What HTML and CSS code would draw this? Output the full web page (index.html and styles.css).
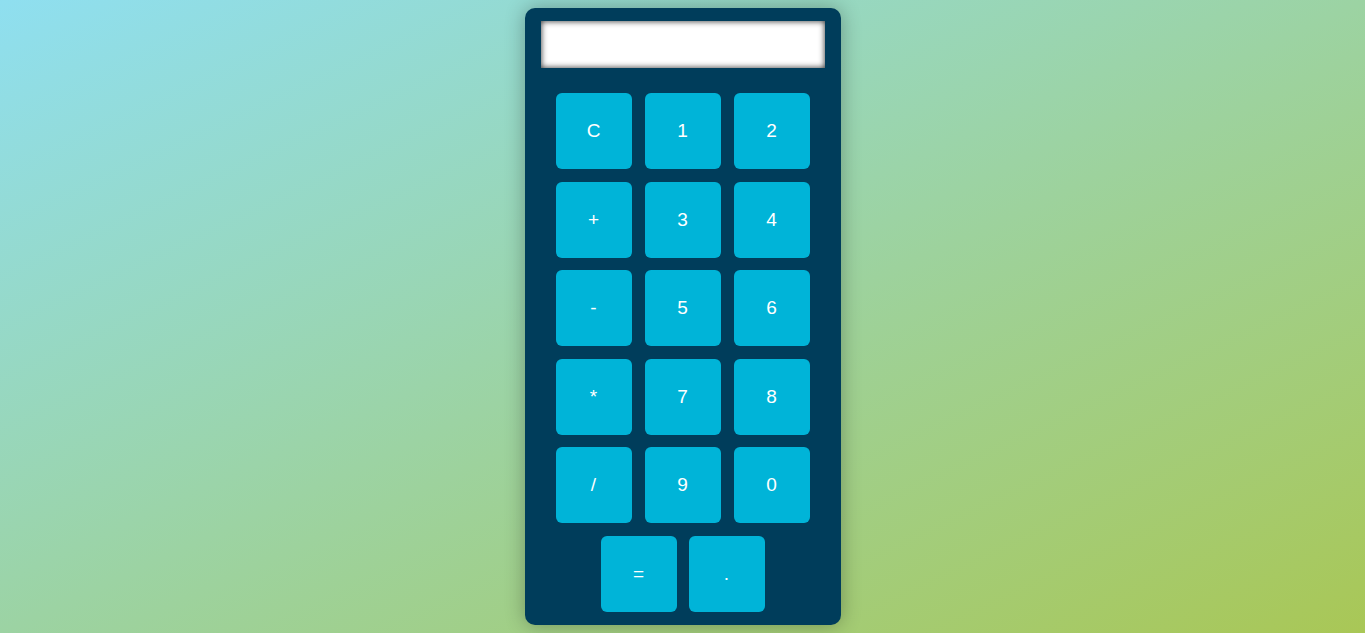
FILE: index.html
```html
<!DOCTYPE html>
<html>
<head>
<meta charset="utf-8">
<link rel="stylesheet" href="styles.css">
</head>
<body>
<div class="calculator">
  <input class="display" type="text" readonly>
  <div class="keys">
    <button class="key">C</button>
    <button class="key">1</button>
    <button class="key">2</button>
    <button class="key">+</button>
    <button class="key">3</button>
    <button class="key">4</button>
    <button class="key">-</button>
    <button class="key">5</button>
    <button class="key">6</button>
    <button class="key">*</button>
    <button class="key">7</button>
    <button class="key">8</button>
    <button class="key">/</button>
    <button class="key">9</button>
    <button class="key">0</button>
    <button class="key">=</button>
    <button class="key">.</button>
  </div>
</div>
</body>
</html>
```
FILE: styles.css
```css
html, body {
  margin: 0;
  height: 100%;
}
body {
  background: linear-gradient(to bottom right, #8fdff0, #a9c756);
  font-family: "Liberation Sans", Arial, sans-serif;
  display: flex;
  justify-content: center;
  align-items: flex-start;
}
.calculator {
  margin-top: 8px;
  width: 316px;
  height: 617px;
  box-sizing: border-box;
  background: #003d5b;
  border-radius: 10px;
  padding: 13px 16px;
  box-shadow: 0 0 20px rgba(0, 0, 0, 0.3);
  display: flex;
  flex-direction: column;
  align-items: center;
}
.display {
  width: 284px;
  height: 47px;
  box-sizing: border-box;
  border: none;
  outline: none;
  background: #fff;
  box-shadow: inset 0 0 6px rgba(0, 0, 0, 0.85);
  margin: 0;
  padding: 0;
}
.keys {
  width: 254px;
  margin-top: 25px;
  display: flex;
  flex-wrap: wrap;
  justify-content: center;
  column-gap: 13px;
  row-gap: 12.6px;
}
.key {
  width: 76px;
  height: 76px;
  border: none;
  border-radius: 6px;
  background: #00b4d8;
  color: #fff;
  font-family: "Liberation Sans", Arial, sans-serif;
  font-size: 19px;
  padding: 0;
  margin: 0;
}
.keys .key:nth-last-child(1),
.keys .key:nth-last-child(2) {
  margin: 0 -0.5px;
}
```
